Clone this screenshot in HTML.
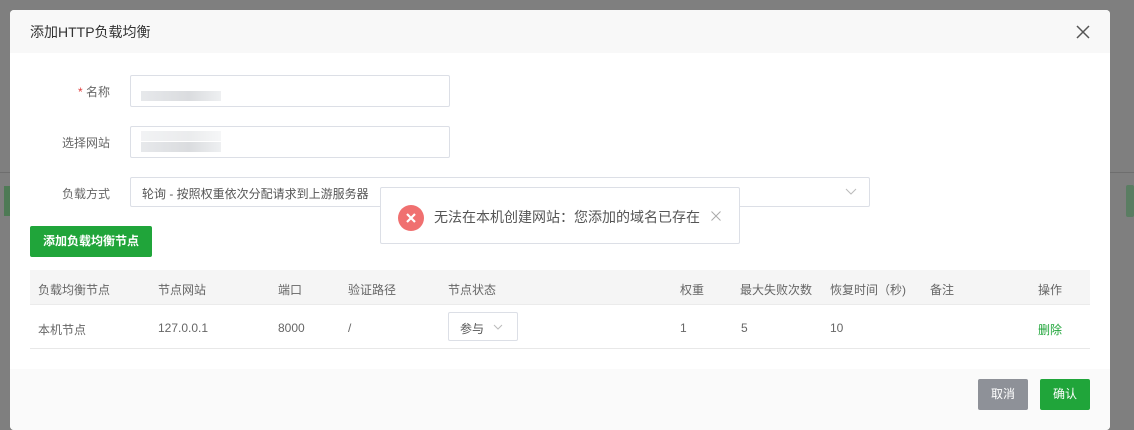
<!DOCTYPE html>
<html><head><meta charset="utf-8"><style>
*{box-sizing:border-box;margin:0;padding:0}
body{width:1134px;height:422px;background:#7f7f7f;position:relative;overflow:hidden;font-family:"Liberation Sans","Noto Sans CJK SC",sans-serif;font-size:12px;color:#555}
.abs{position:absolute}
.dlg{left:10px;top:10px;width:1100px;height:420px;background:#fff;border-radius:4px;overflow:hidden}
.hd{left:0;top:0;width:1100px;height:43px;background:#f8f8f8;font-size:14px;color:#333;padding:12px 20px}
.lbl{width:100px;text-align:right;color:#666;font-size:12px}
.inp{border:1px solid #dcdfe6;border-radius:2px;background:#fff}
.blur{background:linear-gradient(90deg,#e4e6e9,#d6d8db 60%,#eceef0);height:10px;opacity:.9}
.th{top:260px;left:20px;width:1060px;height:35px;background:#f5f5f5;border-bottom:1px solid #ebebeb}
.t{position:absolute;font-size:12px;color:#666}
.ft{left:0;top:359px;width:1100px;height:61px;background:#fafafa}
.btn{border-radius:2px;color:#fff;font-size:12px;text-align:center;line-height:31px;height:31px}
</style></head><body>
<div class="abs" style="left:0;top:172px;width:10px;height:1px;background:#6e6e6e"></div>
<div class="abs" style="left:4px;top:186px;width:6px;height:30px;background:#4e7a55"></div>
<div class="abs" style="left:1110px;top:172px;width:24px;height:1px;background:#6e6e6e"></div>
<div class="abs" style="left:1126px;top:185px;width:8px;height:32px;background:#5a7d62;border-radius:2px"></div>
<div class="abs dlg">
<div class="abs hd">添加HTTP负载均衡</div>
<svg class="abs" style="left:1066px;top:15px" width="14" height="14" viewBox="0 0 14 14"><path d="M1 1L13 13M13 1L1 13" stroke="#555" stroke-width="1.5"/></svg>

<div class="abs lbl" style="left:0;top:73px"><span style="color:#e04040">*</span> 名称</div>
<div class="abs inp" style="left:120px;top:65px;width:320px;height:32px"><div class="abs blur" style="left:10px;top:15px;width:80px"></div></div>
<div class="abs lbl" style="left:0;top:124px">选择网站</div>
<div class="abs inp" style="left:120px;top:116px;width:320px;height:32px"><div class="abs blur" style="left:10px;top:4px;width:80px;opacity:.5"></div><div class="abs blur" style="left:10px;top:15px;width:80px"></div></div>
<div class="abs lbl" style="left:0;top:175px">负载方式</div>
<div class="abs inp" style="left:120px;top:167px;width:740px;height:30px;padding:7px 11px;color:#555">轮询 - 按照权重依次分配请求到上游服务器
<svg class="abs" style="right:12px;top:10px" width="12" height="8" viewBox="0 0 12 8"><path d="M1 1L6 6L11 1" stroke="#bbb" fill="none"/></svg></div>
<div class="abs btn" style="left:20px;top:216px;width:122px;background:#20a53a;font-weight:bold">添加负载均衡节点</div>

<div class="abs th"></div>
<div class="t" style="left:28px;top:271px">负载均衡节点</div>
<div class="t" style="left:148px;top:271px">节点网站</div>
<div class="t" style="left:268px;top:271px">端口</div>
<div class="t" style="left:338px;top:271px">验证路径</div>
<div class="t" style="left:438px;top:271px">节点状态</div>
<div class="t" style="left:670px;top:271px">权重</div>
<div class="t" style="left:730px;top:271px">最大失败次数</div>
<div class="t" style="left:820px;top:271px">恢复时间（秒)</div>
<div class="t" style="left:920px;top:271px">备注</div>
<div class="t" style="left:1028px;top:271px">操作</div>
<div class="t" style="left:28px;top:311px">本机节点</div>
<div class="t" style="left:148px;top:311px">127.0.0.1</div>
<div class="t" style="left:268px;top:311px">8000</div>
<div class="t" style="left:338px;top:311px">/</div>
<div class="abs inp" style="left:438px;top:302px;width:70px;height:29px;padding:7px 11px;color:#555">参与<svg class="abs" style="left:44px;top:11px" width="10" height="7" viewBox="0 0 10 7"><path d="M1 1L5 5L9 1" stroke="#bbb" fill="none"/></svg></div>
<div class="t" style="left:670px;top:311px">1</div>
<div class="t" style="left:731px;top:311px">5</div>
<div class="t" style="left:820px;top:311px">10</div>
<div class="t" style="left:1028px;top:311px;color:#20a53a">删除</div>
<div class="abs" style="left:20px;top:338px;width:1060px;height:1px;background:#e8e8e8"></div>

<div class="abs ft"></div>
<div class="abs btn" style="left:968px;top:369px;width:50px;background:#8e9198">取消</div>
<div class="abs btn" style="left:1030px;top:369px;width:50px;background:#20a53a">确认</div>
</div>

<div class="abs" style="left:380px;top:187px;width:360px;height:57px;background:#fff;border:1px solid #dcdfe6;border-radius:2px">
<div class="abs" style="left:17px;top:17px;width:26px;height:26px;border-radius:50%;background:#f07070"></div>
<svg class="abs" style="left:24px;top:24px" width="12" height="12" viewBox="0 0 12 12"><path d="M2 2L10 10M10 2L2 10" stroke="#fff" stroke-width="2.2"/></svg>
<div class="abs" style="left:53px;top:19px;font-size:14px;color:#555">无法在本机创建网站：您添加的域名已存在</div>
<svg class="abs" style="left:330px;top:23px" width="10" height="10" viewBox="0 0 10 10"><path d="M0.5 0.5L9.5 9.5M9.5 0.5L0.5 9.5" stroke="#aaa"/></svg>
</div>
</body></html>
